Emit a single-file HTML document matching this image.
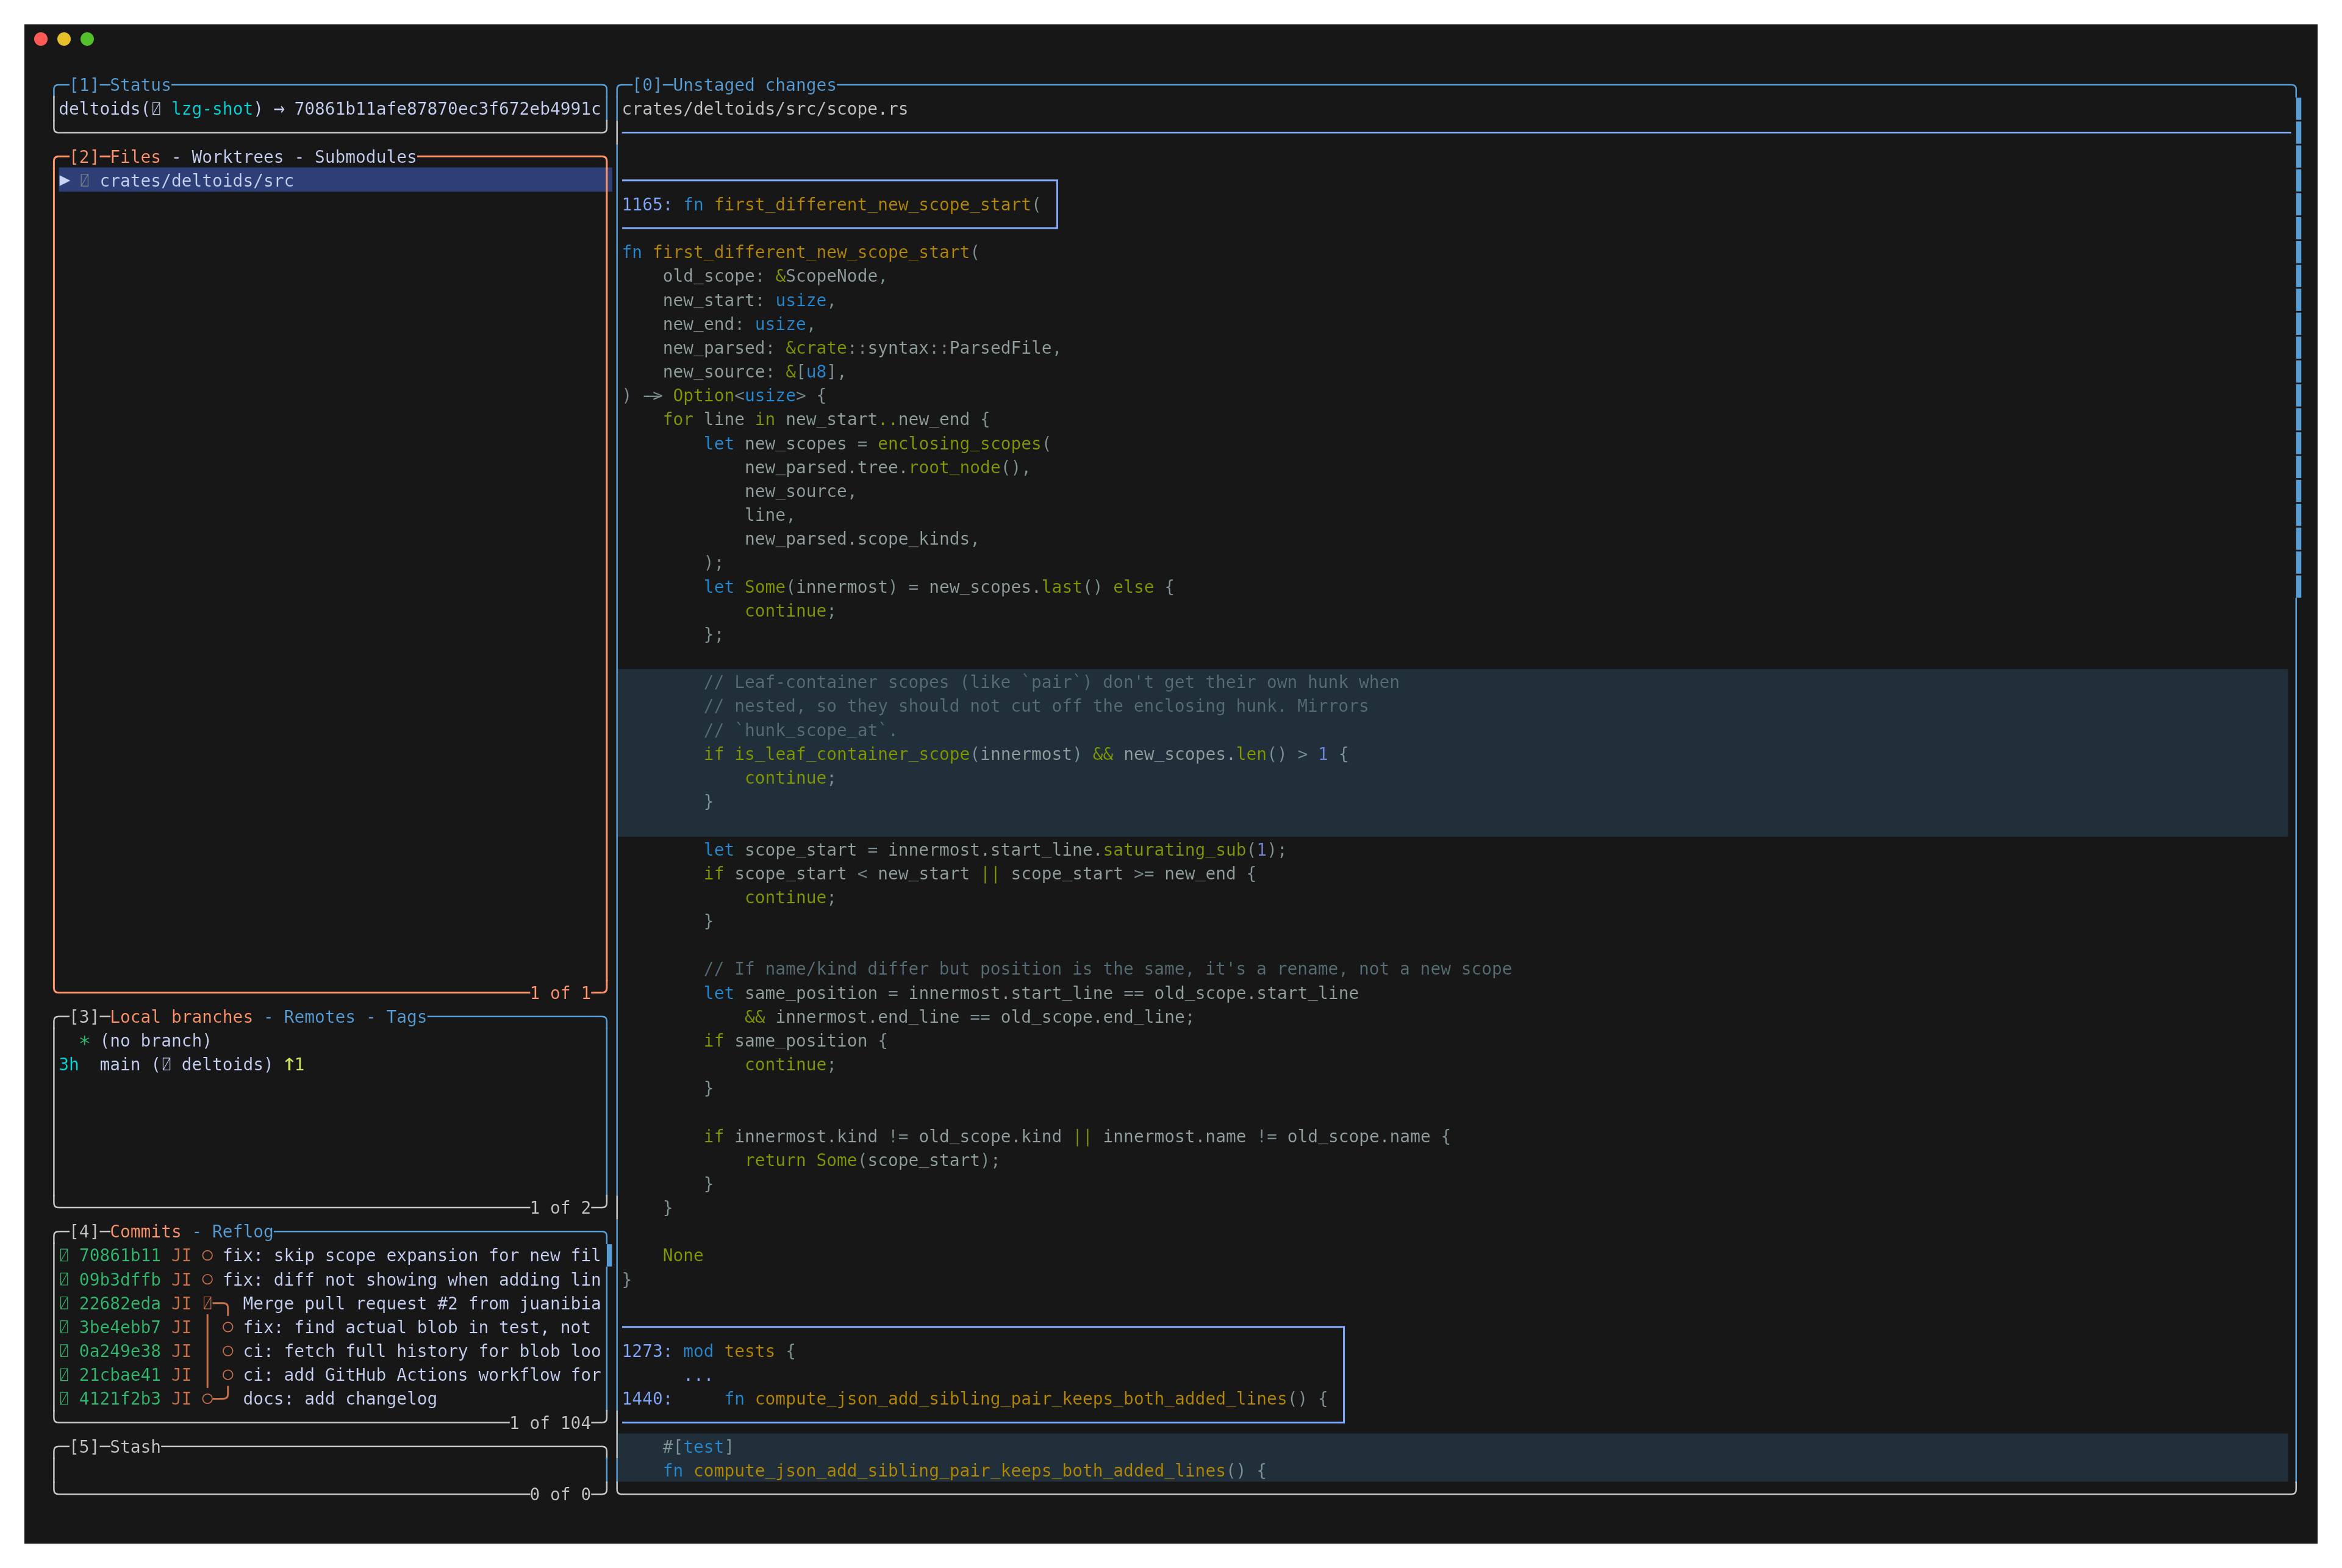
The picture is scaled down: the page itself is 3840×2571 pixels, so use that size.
<!DOCTYPE html>
<html lang="en"><head><meta charset="utf-8"><title>lazygit - deltoids</title>
<style>
html,body{margin:0;padding:0;background:#fff}
body{width:3840px;height:2571px;position:relative;overflow:hidden}
#win{position:absolute;left:40px;top:40px;width:3760px;height:2491px;background:#171717}
.dot{position:absolute;top:53px;width:22px;height:22px;border-radius:50%}
#g{position:absolute;left:0;top:0}
#g path,#g circle{fill:none}
#t{position:absolute;left:0;top:0;font-family:"DejaVu Sans Mono", "Liberation Mono", monospace;font-size:27.88px;line-height:39.169px;color:#c8d3f5;
font-variant-ligatures:none;font-kerning:none;white-space:pre;-webkit-font-smoothing:antialiased;will-change:transform;-webkit-text-stroke:0.2px #171717}
.r{position:absolute;left:0;height:39.169px;width:3840px}
.r span{position:absolute;top:0.6px}
u{text-decoration:none;position:relative;top:-3.4px}
</style></head><body>
<div id="win"></div>
<div class="dot" style="left:56px;background:#ff5a54"></div>
<div class="dot" style="left:94px;background:#e6bf29"></div>
<div class="dot" style="left:132px;background:#52c12b"></div>
<svg id="g" width="3840" height="2571" viewBox="0 0 3840 2571">
<rect x="96.5" y="274.48" width="907.6" height="39.87" fill="#2d3f76"/>
<rect x="1013" y="1097.02" width="2738.8" height="274.88" fill="#212f3a"/>
<rect x="1013" y="2350.43" width="2738.8" height="79.04" fill="#212f3a"/>
<path d="M88.39 159.87V146.58Q88.39 139.08 95.89 139.08H96.79" stroke="#589ed7" stroke-width="2.5"/>
<path d="M96.39 139.08H113.97" stroke="#589ed7" stroke-width="2.5"/>
<path d="M163.53 139.08H181.12" stroke="#589ed7" stroke-width="2.5"/>
<path d="M281.04 139.08H986.9" stroke="#589ed7" stroke-width="2.5"/>
<path d="M986.5 139.08H987.39Q994.89 139.08 994.89 146.58V159.87" stroke="#589ed7" stroke-width="2.5"/>
<path d="M88.39 157.47V199.04" stroke="#c5c8c6" stroke-width="2.5"/>
<path d="M994.89 157.47V199.04" stroke="#589ed7" stroke-width="2.5"/>
<path d="M88.39 196.64V209.92Q88.39 217.42 95.89 217.42H96.79" stroke="#c5c8c6" stroke-width="2.5"/>
<path d="M96.39 217.42H986.9" stroke="#c5c8c6" stroke-width="2.5"/>
<path d="M986.5 217.42H987.39Q994.89 217.42 994.89 209.92V196.64" stroke="#c5c8c6" stroke-width="2.5"/>
<path d="M250.66 168.07h11.2v19.6h-11.2zM250.66 187.67L261.86 168.07" stroke="#c8d3f5" stroke-width="1.15"/>
<path d="M88.39 277.38V264.09Q88.39 256.59 95.89 256.59H96.79" stroke="#ff966c" stroke-width="3.0"/>
<path d="M96.39 256.59H113.97" stroke="#ff966c" stroke-width="3.0"/>
<path d="M163.53 256.59H181.12" stroke="#ff966c" stroke-width="3.0"/>
<path d="M683.93 256.59H986.9" stroke="#ff966c" stroke-width="3.0"/>
<path d="M986.5 256.59H987.39Q994.89 256.59 994.89 264.09V277.38" stroke="#ff966c" stroke-width="3.0"/>
<path d="M88.39 274.98V1609.12" stroke="#ff966c" stroke-width="3.0"/>
<path d="M994.89 274.98V1609.12" stroke="#ff966c" stroke-width="3.0"/>
<path d="M88.39 1606.72V1620.01Q88.39 1627.51 95.89 1627.51H96.79" stroke="#ff966c" stroke-width="3.0"/>
<path d="M96.39 1627.51H869.39" stroke="#ff966c" stroke-width="3.0"/>
<path d="M969.31 1627.51H986.9" stroke="#ff966c" stroke-width="3.0"/>
<path d="M986.5 1627.51H987.39Q994.89 1627.51 994.89 1620.01V1606.72" stroke="#ff966c" stroke-width="3.0"/>
<path d="M133.15 285.58h11.2v19.6h-11.2zM133.15 305.18L144.35 285.58" stroke="#7f8a84" stroke-width="1.15"/>
<path d="M88.39 1687.46V1674.18Q88.39 1666.68 95.89 1666.68H96.79" stroke="#c5c8c6" stroke-width="2.5"/>
<path d="M96.39 1666.68H113.97" stroke="#c5c8c6" stroke-width="2.5"/>
<path d="M163.53 1666.68H181.12" stroke="#c5c8c6" stroke-width="2.5"/>
<path d="M700.72 1666.68H986.9" stroke="#589ed7" stroke-width="2.5"/>
<path d="M986.5 1666.68H987.39Q994.89 1666.68 994.89 1674.18V1687.46" stroke="#589ed7" stroke-width="2.5"/>
<path d="M88.39 1685.06V1961.64" stroke="#c5c8c6" stroke-width="2.5"/>
<path d="M994.89 1685.06V1961.64" stroke="#589ed7" stroke-width="2.5"/>
<path d="M88.39 1959.24V1972.53Q88.39 1980.03 95.89 1980.03H96.79" stroke="#c5c8c6" stroke-width="2.5"/>
<path d="M96.39 1980.03H869.39" stroke="#c5c8c6" stroke-width="2.5"/>
<path d="M969.31 1980.03H986.9" stroke="#c5c8c6" stroke-width="2.5"/>
<path d="M986.5 1980.03H987.39Q994.89 1980.03 994.89 1972.53V1959.24" stroke="#c5c8c6" stroke-width="2.5"/>
<path d="M267.45 1734.83h11.2v19.6h-11.2zM267.45 1754.43L278.65 1734.83" stroke="#c8d3f5" stroke-width="1.15"/>
<path d="M88.39 2039.98V2026.7Q88.39 2019.2 95.89 2019.2H96.79" stroke="#c5c8c6" stroke-width="2.5"/>
<path d="M96.39 2019.2H113.97" stroke="#c5c8c6" stroke-width="2.5"/>
<path d="M163.53 2019.2H181.12" stroke="#c5c8c6" stroke-width="2.5"/>
<path d="M448.91 2019.2H986.9" stroke="#589ed7" stroke-width="2.5"/>
<path d="M986.5 2019.2H987.39Q994.89 2019.2 994.89 2026.7V2039.98" stroke="#589ed7" stroke-width="2.5"/>
<path d="M88.39 2037.58V2314.16" stroke="#c5c8c6" stroke-width="2.5"/>
<path d="M994.89 2076.75V2314.16" stroke="#589ed7" stroke-width="2.5"/>
<rect x="994.89" y="2040.18" width="8.49" height="36.47" fill="#589ed7"/>
<path d="M88.39 2311.76V2325.05Q88.39 2332.55 95.89 2332.55H96.79" stroke="#c5c8c6" stroke-width="2.5"/>
<path d="M96.39 2332.55H835.81" stroke="#c5c8c6" stroke-width="2.5"/>
<path d="M969.31 2332.55H986.9" stroke="#c5c8c6" stroke-width="2.5"/>
<path d="M986.5 2332.55H987.39Q994.89 2332.55 994.89 2325.05V2311.76" stroke="#c5c8c6" stroke-width="2.5"/>
<path d="M99.58 2048.18h11.2v19.6h-11.2zM99.58 2067.78L110.78 2048.18" stroke="#31bb71" stroke-width="1.15"/>
<circle cx="340.2" cy="2058.37" r="7.8" stroke="#c9714b" stroke-width="1.7"/>
<path d="M99.58 2087.35h11.2v19.6h-11.2zM99.58 2106.95L110.78 2087.35" stroke="#31bb71" stroke-width="1.15"/>
<circle cx="340.2" cy="2097.53" r="7.8" stroke="#c9714b" stroke-width="1.7"/>
<path d="M99.58 2126.52h11.2v19.6h-11.2zM99.58 2146.12L110.78 2126.52" stroke="#31bb71" stroke-width="1.15"/>
<path d="M334.6 2126.52h11.2v19.6h-11.2zM334.6 2146.12L345.8 2126.52" stroke="#c9714b" stroke-width="1.15"/>
<path d="M348.59 2136.7H366.27Q373.77 2136.7 373.77 2144.2V2157.79" stroke="#c9714b" stroke-width="3"/>
<path d="M99.58 2165.69h11.2v19.6h-11.2zM99.58 2185.29L110.78 2165.69" stroke="#31bb71" stroke-width="1.15"/>
<circle cx="373.77" cy="2175.87" r="7.8" stroke="#c9714b" stroke-width="1.7"/>
<path d="M99.58 2204.86h11.2v19.6h-11.2zM99.58 2224.46L110.78 2204.86" stroke="#31bb71" stroke-width="1.15"/>
<circle cx="373.77" cy="2215.04" r="7.8" stroke="#c9714b" stroke-width="1.7"/>
<path d="M99.58 2244.03h11.2v19.6h-11.2zM99.58 2263.63L110.78 2244.03" stroke="#31bb71" stroke-width="1.15"/>
<circle cx="373.77" cy="2254.21" r="7.8" stroke="#c9714b" stroke-width="1.7"/>
<path d="M99.58 2283.19h11.2v19.6h-11.2zM99.58 2302.79L110.78 2283.19" stroke="#31bb71" stroke-width="1.15"/>
<circle cx="340.2" cy="2293.38" r="7.8" stroke="#c9714b" stroke-width="1.7"/>
<path d="M348.59 2293.38H366.27Q373.77 2293.38 373.77 2285.88V2272.29" stroke="#c9714b" stroke-width="3"/>
<path d="M340.2 2154.79V2275.79" stroke="#c9714b" stroke-width="3"/>
<path d="M88.39 2392.5V2379.22Q88.39 2371.72 95.89 2371.72H96.79" stroke="#c5c8c6" stroke-width="2.5"/>
<path d="M96.39 2371.72H113.97" stroke="#c5c8c6" stroke-width="2.5"/>
<path d="M163.53 2371.72H181.12" stroke="#c5c8c6" stroke-width="2.5"/>
<path d="M264.26 2371.72H986.9" stroke="#c5c8c6" stroke-width="2.5"/>
<path d="M986.5 2371.72H987.39Q994.89 2371.72 994.89 2379.22V2392.5" stroke="#c5c8c6" stroke-width="2.5"/>
<path d="M88.39 2390.1V2431.67" stroke="#c5c8c6" stroke-width="2.5"/>
<path d="M994.89 2390.1V2431.67" stroke="#589ed7" stroke-width="2.5"/>
<path d="M88.39 2429.27V2442.56Q88.39 2450.06 95.89 2450.06H96.79" stroke="#c5c8c6" stroke-width="2.5"/>
<path d="M96.39 2450.06H869.39" stroke="#c5c8c6" stroke-width="2.5"/>
<path d="M969.31 2450.06H986.9" stroke="#c5c8c6" stroke-width="2.5"/>
<path d="M986.5 2450.06H987.39Q994.89 2450.06 994.89 2442.56V2429.27" stroke="#c5c8c6" stroke-width="2.5"/>
<path d="M1011.68 159.87V146.58Q1011.68 139.08 1019.18 139.08H1020.07" stroke="#589ed7" stroke-width="2.5"/>
<path d="M1019.67 139.08H1037.26" stroke="#589ed7" stroke-width="2.5"/>
<path d="M1086.82 139.08H1104.41" stroke="#589ed7" stroke-width="2.5"/>
<path d="M1372.2 139.08H3756.75" stroke="#589ed7" stroke-width="2.5"/>
<path d="M3756.35 139.08H3757.25Q3764.75 139.08 3764.75 146.58V159.87" stroke="#589ed7" stroke-width="2.5"/>
<path d="M1011.68 158.67V197.84" stroke="#589ed7" stroke-width="2.5"/>
<path d="M1011.68 197.84V237.01" stroke="#c5c8c6" stroke-width="2.5"/>
<path d="M1011.68 237.01V1960.44" stroke="#589ed7" stroke-width="2.5"/>
<path d="M1011.68 1960.44V1999.61" stroke="#c5c8c6" stroke-width="2.5"/>
<path d="M1011.68 1999.61V2312.96" stroke="#589ed7" stroke-width="2.5"/>
<path d="M1011.68 2312.96V2391.3" stroke="#c5c8c6" stroke-width="2.5"/>
<path d="M1011.68 2391.3V2430.47" stroke="#589ed7" stroke-width="2.5"/>
<rect x="3764.75" y="160.07" width="8.49" height="36.47" fill="#589ed7"/>
<rect x="3764.75" y="199.24" width="8.49" height="36.47" fill="#589ed7"/>
<rect x="3764.75" y="238.41" width="8.49" height="36.47" fill="#589ed7"/>
<rect x="3764.75" y="277.58" width="8.49" height="36.47" fill="#589ed7"/>
<rect x="3764.75" y="316.74" width="8.49" height="36.47" fill="#589ed7"/>
<rect x="3764.75" y="355.91" width="8.49" height="36.47" fill="#589ed7"/>
<rect x="3764.75" y="395.08" width="8.49" height="36.47" fill="#589ed7"/>
<rect x="3764.75" y="434.25" width="8.49" height="36.47" fill="#589ed7"/>
<rect x="3764.75" y="473.42" width="8.49" height="36.47" fill="#589ed7"/>
<rect x="3764.75" y="512.59" width="8.49" height="36.47" fill="#589ed7"/>
<rect x="3764.75" y="551.76" width="8.49" height="36.47" fill="#589ed7"/>
<rect x="3764.75" y="590.93" width="8.49" height="36.47" fill="#589ed7"/>
<rect x="3764.75" y="630.1" width="8.49" height="36.47" fill="#589ed7"/>
<rect x="3764.75" y="669.27" width="8.49" height="36.47" fill="#589ed7"/>
<rect x="3764.75" y="708.43" width="8.49" height="36.47" fill="#589ed7"/>
<rect x="3764.75" y="747.6" width="8.49" height="36.47" fill="#589ed7"/>
<rect x="3764.75" y="786.77" width="8.49" height="36.47" fill="#589ed7"/>
<rect x="3764.75" y="825.94" width="8.49" height="36.47" fill="#589ed7"/>
<rect x="3764.75" y="865.11" width="8.49" height="36.47" fill="#589ed7"/>
<rect x="3764.75" y="904.28" width="8.49" height="36.47" fill="#589ed7"/>
<rect x="3764.75" y="943.45" width="8.49" height="36.47" fill="#589ed7"/>
<path d="M3764.75 980.02V2431.67" stroke="#589ed7" stroke-width="2.5"/>
<path d="M1011.68 2429.27V2442.56Q1011.68 2450.06 1019.18 2450.06H1020.07" stroke="#c5c8c6" stroke-width="2.5"/>
<path d="M1019.67 2450.06H3756.75" stroke="#c5c8c6" stroke-width="2.5"/>
<path d="M3756.35 2450.06H3757.25Q3764.75 2450.06 3764.75 2442.56V2429.27" stroke="#c5c8c6" stroke-width="2.5"/>
<path d="M1019.67 217.42H3756.75" stroke="#82aaff" stroke-width="2.8"/>
<path d="M1020.07 295.76H1733.52V374.1H1020.07" stroke="#82aaff" stroke-width="3" stroke-linejoin="miter"/>
<path d="M1020.07 2175.87H2203.56V2332.55H1020.07" stroke="#82aaff" stroke-width="3" stroke-linejoin="miter"/>
<path d="M1055.6 649.8H1083.5" stroke="#839496" stroke-width="2.2"/>
</svg>
<div id="t">
<div class="r" style="top:119.5px"><span style="left:113.07px;color:#589ed7">[1]</span><span style="left:180.22px;color:#589ed7">Status</span><span style="left:1036.36px;color:#589ed7">[0]</span><span style="left:1103.51px;color:#589ed7">Unstaged changes</span></div>
<div class="r" style="top:158.67px"><span style="left:96.29px;color:#c8d3f5">deltoids(</span><span style="left:280.94px;color:#04d7d7">lzg-shot</span><span style="left:415.24px;color:#c8d3f5">)</span><span style="left:448.81px;color:#c8d3f5;font-size:36px;top:-1.71px;left:446.87px;transform:scaleX(0.86)">→</span><span style="left:482.39px;color:#c8d3f5">70861b11afe87870ec3f672eb4991c</span><span style="left:1019.57px;color:#c5c8c6">crates/deltoids/src/scope.rs</span></div>
<div class="r" style="top:237.01px"><span style="left:113.07px;color:#ff966c">[2]</span><span style="left:180.22px;color:#ff966c">Files</span><span style="left:280.94px;color:#c8d3f5">-</span><span style="left:314.52px;color:#c8d3f5">Worktrees</span><span style="left:482.39px;color:#c8d3f5">-</span><span style="left:515.96px;color:#c8d3f5">Submodules</span></div>
<div class="r" style="top:276.18px"><span style="left:96.29px;color:#c8d3f5;top:-2.6px;font-size:30px;left:97.4px;-webkit-text-stroke-color:#2d3f76">▶</span><span style="left:163.44px;color:#c8d3f5;-webkit-text-stroke-color:#2d3f76">crates/deltoids/src</span></div>
<div class="r" style="top:315.34px"><span style="left:1019.57px;color:#82aaff">1165:</span><span style="left:1120.29px;color:#268bd2">fn</span><span style="left:1170.65px;color:#b58900">first<u>_</u>different<u>_</u>new<u>_</u>scope<u>_</u>start</span><span style="left:1691.05px;color:#839496">(</span></div>
<div class="r" style="top:393.68px"><span style="left:1019.57px;color:#268bd2">fn</span><span style="left:1069.93px;color:#b58900">first<u>_</u>different<u>_</u>new<u>_</u>scope<u>_</u>start</span><span style="left:1590.33px;color:#839496">(</span></div>
<div class="r" style="top:432.85px"><span style="left:1086.72px;color:#93a1a1">old<u>_</u>scope</span><span style="left:1237.8px;color:#839496">:</span><span style="left:1271.38px;color:#859900">&amp;</span><span style="left:1288.16px;color:#93a1a1">ScopeNode</span><span style="left:1439.25px;color:#839496">,</span></div>
<div class="r" style="top:472.02px"><span style="left:1086.72px;color:#93a1a1">new<u>_</u>start</span><span style="left:1237.8px;color:#839496">:</span><span style="left:1271.38px;color:#268bd2">usize</span><span style="left:1355.31px;color:#839496">,</span></div>
<div class="r" style="top:511.19px"><span style="left:1086.72px;color:#93a1a1">new<u>_</u>end</span><span style="left:1204.23px;color:#839496">:</span><span style="left:1237.8px;color:#268bd2">usize</span><span style="left:1321.74px;color:#839496">,</span></div>
<div class="r" style="top:550.36px"><span style="left:1086.72px;color:#93a1a1">new<u>_</u>parsed</span><span style="left:1254.59px;color:#839496">:</span><span style="left:1288.16px;color:#859900">&amp;crate</span><span style="left:1388.89px;color:#7b8d90">::</span><span style="left:1422.46px;color:#93a1a1">syntax</span><span style="left:1523.18px;color:#7b8d90">::</span><span style="left:1556.76px;color:#93a1a1">ParsedFile</span><span style="left:1724.63px;color:#839496">,</span></div>
<div class="r" style="top:589.53px"><span style="left:1086.72px;color:#93a1a1">new<u>_</u>source</span><span style="left:1254.59px;color:#839496">:</span><span style="left:1288.16px;color:#859900">&amp;</span><span style="left:1304.95px;color:#839496">[</span><span style="left:1321.74px;color:#268bd2">u8</span><span style="left:1355.31px;color:#839496">],</span></div>
<div class="r" style="top:628.7px"><span style="left:1019.57px;color:#839496">)</span><span style="left:1053.15px;color:#839496">-&gt;</span><span style="left:1103.51px;color:#859900">Option</span><span style="left:1204.23px;color:#7b8d90">&lt;</span><span style="left:1221.02px;color:#268bd2">usize</span><span style="left:1304.95px;color:#7b8d90">&gt;</span><span style="left:1338.52px;color:#839496">{</span></div>
<div class="r" style="top:667.87px"><span style="left:1086.72px;color:#859900">for</span><span style="left:1153.87px;color:#93a1a1">line</span><span style="left:1237.8px;color:#859900">in</span><span style="left:1288.16px;color:#93a1a1">new<u>_</u>start</span><span style="left:1439.25px;color:#859900">..</span><span style="left:1472.82px;color:#93a1a1">new<u>_</u>end</span><span style="left:1607.12px;color:#839496">{</span></div>
<div class="r" style="top:707.03px"><span style="left:1153.87px;color:#268bd2">let</span><span style="left:1221.02px;color:#93a1a1">new<u>_</u>scopes</span><span style="left:1405.67px;color:#7b8d90">=</span><span style="left:1439.25px;color:#859900">enclosing<u>_</u>scopes</span><span style="left:1707.84px;color:#839496">(</span></div>
<div class="r" style="top:746.2px"><span style="left:1221.02px;color:#93a1a1">new<u>_</u>parsed.tree.</span><span style="left:1489.61px;color:#859900">root<u>_</u>node</span><span style="left:1640.69px;color:#839496">(),</span></div>
<div class="r" style="top:785.37px"><span style="left:1221.02px;color:#93a1a1">new<u>_</u>source</span><span style="left:1388.89px;color:#839496">,</span></div>
<div class="r" style="top:824.54px"><span style="left:1221.02px;color:#93a1a1">line</span><span style="left:1288.16px;color:#839496">,</span></div>
<div class="r" style="top:863.71px"><span style="left:1221.02px;color:#93a1a1">new<u>_</u>parsed.scope<u>_</u>kinds</span><span style="left:1590.33px;color:#839496">,</span></div>
<div class="r" style="top:902.88px"><span style="left:1153.87px;color:#839496">);</span></div>
<div class="r" style="top:942.05px"><span style="left:1153.87px;color:#268bd2">let</span><span style="left:1221.02px;color:#859900">Some</span><span style="left:1288.16px;color:#839496">(</span><span style="left:1304.95px;color:#93a1a1">innermost</span><span style="left:1456.03px;color:#839496">)</span><span style="left:1489.61px;color:#7b8d90">=</span><span style="left:1523.18px;color:#93a1a1">new<u>_</u>scopes.</span><span style="left:1707.84px;color:#859900">last</span><span style="left:1774.99px;color:#839496">()</span><span style="left:1825.35px;color:#859900">else</span><span style="left:1909.28px;color:#839496">{</span></div>
<div class="r" style="top:981.22px"><span style="left:1221.02px;color:#859900">continue</span><span style="left:1355.31px;color:#839496">;</span></div>
<div class="r" style="top:1020.39px"><span style="left:1153.87px;color:#839496">};</span></div>
<div class="r" style="top:1098.72px"><span style="left:1153.87px;color:#586e75;-webkit-text-stroke-color:#212f3a">// Leaf-container scopes (like `pair`) don't get their own hunk when</span></div>
<div class="r" style="top:1137.89px"><span style="left:1153.87px;color:#586e75;-webkit-text-stroke-color:#212f3a">// nested, so they should not cut off the enclosing hunk. Mirrors</span></div>
<div class="r" style="top:1177.06px"><span style="left:1153.87px;color:#586e75;-webkit-text-stroke-color:#212f3a">// `hunk<u>_</u>scope<u>_</u>at`.</span></div>
<div class="r" style="top:1216.23px"><span style="left:1153.87px;color:#859900;-webkit-text-stroke-color:#212f3a">if</span><span style="left:1204.23px;color:#859900;-webkit-text-stroke-color:#212f3a">is<u>_</u>leaf<u>_</u>container<u>_</u>scope</span><span style="left:1590.33px;color:#839496;-webkit-text-stroke-color:#212f3a">(</span><span style="left:1607.12px;color:#93a1a1;-webkit-text-stroke-color:#212f3a">innermost</span><span style="left:1758.2px;color:#839496;-webkit-text-stroke-color:#212f3a">)</span><span style="left:1791.77px;color:#859900;-webkit-text-stroke-color:#212f3a">&amp;&amp;</span><span style="left:1842.13px;color:#93a1a1;-webkit-text-stroke-color:#212f3a">new<u>_</u>scopes.</span><span style="left:2026.79px;color:#859900;-webkit-text-stroke-color:#212f3a">len</span><span style="left:2077.15px;color:#839496;-webkit-text-stroke-color:#212f3a">()</span><span style="left:2127.51px;color:#7b8d90;-webkit-text-stroke-color:#212f3a">&gt;</span><span style="left:2161.09px;color:#7388d8;-webkit-text-stroke-color:#212f3a">1</span><span style="left:2194.66px;color:#839496;-webkit-text-stroke-color:#212f3a">{</span></div>
<div class="r" style="top:1255.4px"><span style="left:1221.02px;color:#859900;-webkit-text-stroke-color:#212f3a">continue</span><span style="left:1355.31px;color:#839496;-webkit-text-stroke-color:#212f3a">;</span></div>
<div class="r" style="top:1294.57px"><span style="left:1153.87px;color:#839496;-webkit-text-stroke-color:#212f3a">}</span></div>
<div class="r" style="top:1372.91px"><span style="left:1153.87px;color:#268bd2">let</span><span style="left:1221.02px;color:#93a1a1">scope<u>_</u>start</span><span style="left:1422.46px;color:#7b8d90">=</span><span style="left:1456.03px;color:#93a1a1">innermost.start<u>_</u>line.</span><span style="left:1808.56px;color:#859900">saturating<u>_</u>sub</span><span style="left:2043.58px;color:#839496">(</span><span style="left:2060.37px;color:#7388d8">1</span><span style="left:2077.15px;color:#839496">);</span></div>
<div class="r" style="top:1412.08px"><span style="left:1153.87px;color:#859900">if</span><span style="left:1204.23px;color:#93a1a1">scope<u>_</u>start</span><span style="left:1405.67px;color:#7b8d90">&lt;</span><span style="left:1439.25px;color:#93a1a1">new<u>_</u>start</span><span style="left:1607.12px;color:#859900">||</span><span style="left:1657.48px;color:#93a1a1">scope<u>_</u>start</span><span style="left:1858.92px;color:#7b8d90">&gt;=</span><span style="left:1909.28px;color:#93a1a1">new<u>_</u>end</span><span style="left:2043.58px;color:#839496">{</span></div>
<div class="r" style="top:1451.25px"><span style="left:1221.02px;color:#859900">continue</span><span style="left:1355.31px;color:#839496">;</span></div>
<div class="r" style="top:1490.41px"><span style="left:1153.87px;color:#839496">}</span></div>
<div class="r" style="top:1568.75px"><span style="left:1153.87px;color:#586e75">// If name/kind differ but position is the same, it's a rename, not a new scope</span></div>
<div class="r" style="top:1607.92px"><span style="left:868.49px;color:#ff966c">1 of 1</span><span style="left:1153.87px;color:#268bd2">let</span><span style="left:1221.02px;color:#93a1a1">same<u>_</u>position</span><span style="left:1456.03px;color:#7b8d90">=</span><span style="left:1489.61px;color:#93a1a1">innermost.start<u>_</u>line</span><span style="left:1842.13px;color:#7b8d90">==</span><span style="left:1892.5px;color:#93a1a1">old<u>_</u>scope.start<u>_</u>line</span></div>
<div class="r" style="top:1647.09px"><span style="left:113.07px;color:#c5c8c6">[3]</span><span style="left:180.22px;color:#ff966c">Local branches</span><span style="left:432.03px;color:#589ed7">-</span><span style="left:465.6px;color:#589ed7">Remotes</span><span style="left:599.9px;color:#589ed7">-</span><span style="left:633.47px;color:#589ed7">Tags</span><span style="left:1221.02px;color:#859900">&amp;&amp;</span><span style="left:1271.38px;color:#93a1a1">innermost.end<u>_</u>line</span><span style="left:1590.33px;color:#7b8d90">==</span><span style="left:1640.69px;color:#93a1a1">old<u>_</u>scope.end<u>_</u>line</span><span style="left:1942.86px;color:#839496">;</span></div>
<div class="r" style="top:1686.26px"><span style="left:129.86px;color:#31bb71;font-size:34px;top:6.08px;left:128.52px">*</span><span style="left:163.44px;color:#c8d3f5">(no branch)</span><span style="left:1153.87px;color:#859900">if</span><span style="left:1204.23px;color:#93a1a1">same<u>_</u>position</span><span style="left:1439.25px;color:#839496">{</span></div>
<div class="r" style="top:1725.43px"><span style="left:96.29px;color:#04d7d7">3h</span><span style="left:163.44px;color:#c8d3f5">main</span><span style="left:247.37px;color:#c8d3f5">(</span><span style="left:297.73px;color:#c8d3f5">deltoids)</span><span style="left:465.6px;color:#d3e561;font-size:38px;top:-2.9px;left:463.06px;transform:scaleX(1.15)">↑</span><span style="left:482.39px;color:#d3e561">1</span><span style="left:1221.02px;color:#859900">continue</span><span style="left:1355.31px;color:#839496">;</span></div>
<div class="r" style="top:1764.6px"><span style="left:1153.87px;color:#839496">}</span></div>
<div class="r" style="top:1842.94px"><span style="left:1153.87px;color:#859900">if</span><span style="left:1204.23px;color:#93a1a1">innermost.kind</span><span style="left:1456.03px;color:#7b8d90">!=</span><span style="left:1506.39px;color:#93a1a1">old<u>_</u>scope.kind</span><span style="left:1758.2px;color:#859900">||</span><span style="left:1808.56px;color:#93a1a1">innermost.name</span><span style="left:2060.37px;color:#7b8d90">!=</span><span style="left:2110.73px;color:#93a1a1">old<u>_</u>scope.name</span><span style="left:2362.53px;color:#839496">{</span></div>
<div class="r" style="top:1882.1px"><span style="left:1221.02px;color:#859900">return</span><span style="left:1338.52px;color:#859900">Some</span><span style="left:1405.67px;color:#839496">(</span><span style="left:1422.46px;color:#93a1a1">scope<u>_</u>start</span><span style="left:1607.12px;color:#839496">);</span></div>
<div class="r" style="top:1921.27px"><span style="left:1153.87px;color:#839496">}</span></div>
<div class="r" style="top:1960.44px"><span style="left:868.49px;color:#c5c8c6">1 of 2</span><span style="left:1086.72px;color:#839496">}</span></div>
<div class="r" style="top:1999.61px"><span style="left:113.07px;color:#c5c8c6">[4]</span><span style="left:180.22px;color:#ff966c">Commits</span><span style="left:314.52px;color:#589ed7">-</span><span style="left:348.09px;color:#589ed7">Reflog</span></div>
<div class="r" style="top:2038.78px"><span style="left:129.86px;color:#31bb71">70861b11</span><span style="left:280.94px;color:#c9714b">JI</span><span style="left:364.88px;color:#c8d3f5">fix: skip scope expansion for new fil</span><span style="left:1086.72px;color:#859900">None</span></div>
<div class="r" style="top:2077.95px"><span style="left:129.86px;color:#31bb71">09b3dffb</span><span style="left:280.94px;color:#c9714b">JI</span><span style="left:364.88px;color:#c8d3f5">fix: diff not showing when adding lin</span><span style="left:1019.57px;color:#839496">}</span></div>
<div class="r" style="top:2117.12px"><span style="left:129.86px;color:#31bb71">22682eda</span><span style="left:280.94px;color:#c9714b">JI</span><span style="left:398.45px;color:#c8d3f5">Merge pull request #2 from juanibia</span></div>
<div class="r" style="top:2156.29px"><span style="left:129.86px;color:#31bb71">3be4ebb7</span><span style="left:280.94px;color:#c9714b">JI</span><span style="left:398.45px;color:#c8d3f5">fix: find actual blob in test, not</span></div>
<div class="r" style="top:2195.46px"><span style="left:129.86px;color:#31bb71">0a249e38</span><span style="left:280.94px;color:#c9714b">JI</span><span style="left:398.45px;color:#c8d3f5">ci: fetch full history for blob loo</span><span style="left:1019.57px;color:#82aaff">1273:</span><span style="left:1120.29px;color:#268bd2">mod</span><span style="left:1187.44px;color:#b58900">tests</span><span style="left:1288.16px;color:#839496">{</span></div>
<div class="r" style="top:2234.63px"><span style="left:129.86px;color:#31bb71">21cbae41</span><span style="left:280.94px;color:#c9714b">JI</span><span style="left:398.45px;color:#c8d3f5">ci: add GitHub Actions workflow for</span><span style="left:1120.29px;color:#82aaff">...</span></div>
<div class="r" style="top:2273.79px"><span style="left:129.86px;color:#31bb71">4121f2b3</span><span style="left:280.94px;color:#c9714b">JI</span><span style="left:398.45px;color:#c8d3f5">docs: add changelog</span><span style="left:1019.57px;color:#82aaff">1440:</span><span style="left:1187.44px;color:#268bd2">fn</span><span style="left:1237.8px;color:#b58900">compute<u>_</u>json<u>_</u>add<u>_</u>sibling<u>_</u>pair<u>_</u>keeps<u>_</u>both<u>_</u>added<u>_</u>lines</span><span style="left:2110.73px;color:#839496">()</span><span style="left:2161.09px;color:#839496">{</span></div>
<div class="r" style="top:2312.96px"><span style="left:834.91px;color:#c5c8c6">1 of 104</span></div>
<div class="r" style="top:2352.13px"><span style="left:113.07px;color:#c5c8c6">[5]</span><span style="left:180.22px;color:#c5c8c6">Stash</span><span style="left:1086.72px;color:#839496;-webkit-text-stroke-color:#212f3a">#[</span><span style="left:1120.29px;color:#268bd2;-webkit-text-stroke-color:#212f3a">test</span><span style="left:1187.44px;color:#839496;-webkit-text-stroke-color:#212f3a">]</span></div>
<div class="r" style="top:2391.3px"><span style="left:1086.72px;color:#268bd2;-webkit-text-stroke-color:#212f3a">fn</span><span style="left:1137.08px;color:#b58900;-webkit-text-stroke-color:#212f3a">compute<u>_</u>json<u>_</u>add<u>_</u>sibling<u>_</u>pair<u>_</u>keeps<u>_</u>both<u>_</u>added<u>_</u>lines</span><span style="left:2010px;color:#839496;-webkit-text-stroke-color:#212f3a">()</span><span style="left:2060.37px;color:#839496;-webkit-text-stroke-color:#212f3a">{</span></div>
<div class="r" style="top:2430.47px"><span style="left:868.49px;color:#c5c8c6">0 of 0</span></div>
</div>
</body></html>
